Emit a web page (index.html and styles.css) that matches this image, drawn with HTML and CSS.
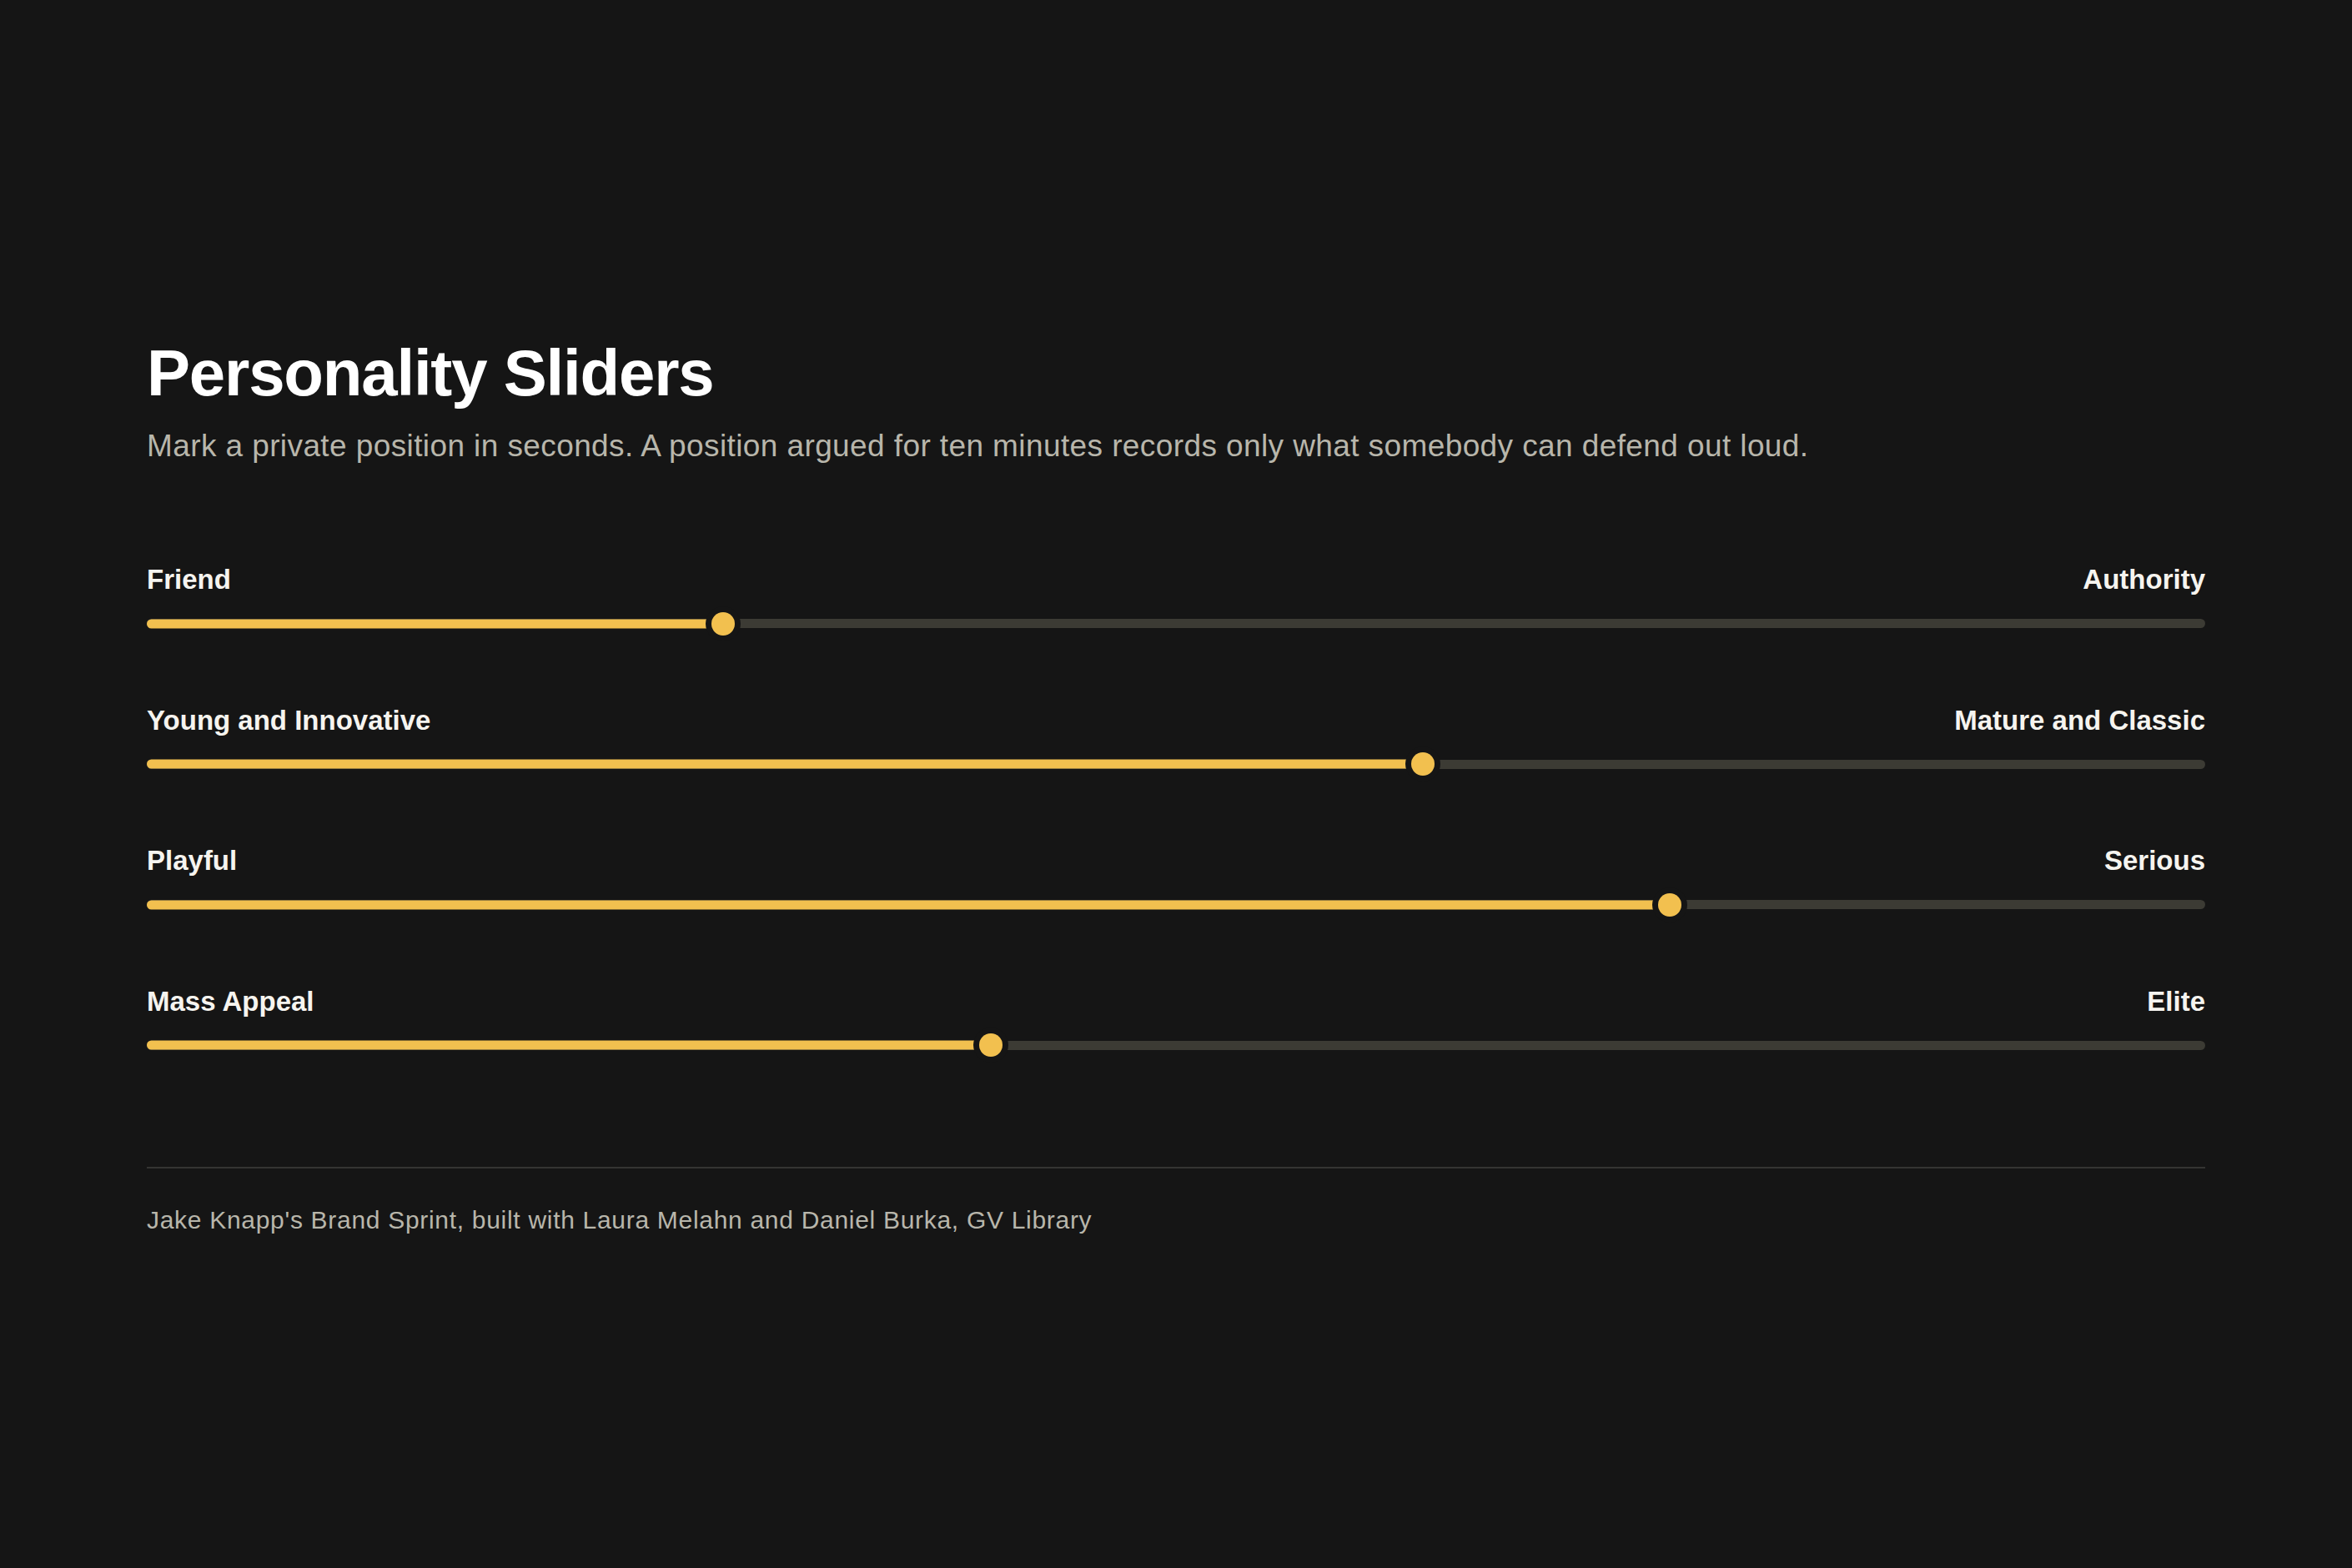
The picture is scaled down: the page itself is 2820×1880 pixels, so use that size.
FILE: index.html
```html
<!DOCTYPE html>
<html lang="en">

<head>
  <meta charset="UTF-8">
  <meta name="viewport" content="width=device-width, initial-scale=1.0">
  <title>Personality Sliders</title>

  <link rel="stylesheet" href="styles.css">
</head>

<body>
  <main class="page">
    <!-- heading -->
    <header class="intro">
      <h1 class="title">Personality Sliders</h1>
      <p class="lede">Mark a private position in seconds. A position argued for ten minutes records only what somebody can defend out loud.</p>
    </header>

    <!-- sliders -->
    <section class="sliders">
      <div class="slider">
        <div class="slider_labels">
          <span>Friend</span>
          <span>Authority</span>
        </div>
        <div class="slider_track">
          <div class="track_bar"></div>
          <div class="track_fill" style="width: 28%"></div>
          <div class="thumb" style="left: 28%"></div>
        </div>
      </div>

      <div class="slider">
        <div class="slider_labels">
          <span>Young and Innovative</span>
          <span>Mature and Classic</span>
        </div>
        <div class="slider_track">
          <div class="track_bar"></div>
          <div class="track_fill" style="width: 62%"></div>
          <div class="thumb" style="left: 62%"></div>
        </div>
      </div>

      <div class="slider">
        <div class="slider_labels">
          <span>Playful</span>
          <span>Serious</span>
        </div>
        <div class="slider_track">
          <div class="track_bar"></div>
          <div class="track_fill" style="width: 74%"></div>
          <div class="thumb" style="left: 74%"></div>
        </div>
      </div>

      <div class="slider">
        <div class="slider_labels">
          <span>Mass Appeal</span>
          <span>Elite</span>
        </div>
        <div class="slider_track">
          <div class="track_bar"></div>
          <div class="track_fill" style="width: 41%"></div>
          <div class="thumb" style="left: 41%"></div>
        </div>
      </div>
    </section>

    <!-- credit -->
    <footer class="credit">
      <p>Jake Knapp's Brand Sprint, built with Laura Melahn and Daniel Burka, GV Library</p>
    </footer>
  </main>
</body>

</html>
```

FILE: styles.css
```css
* {
  margin: 0;
  padding: 0;
  box-sizing: border-box;
}

body {
  background: #151515;
  color: #f4f2ec;
  font-family: "Liberation Sans", Arial, Helvetica, sans-serif;
}

.page {
  display: flex;
  flex-direction: column;
  justify-content: center;
  min-height: 100vh;
  padding: 5px 176px 0;
}

/* heading */
.title {
  font-size: 78px;
  line-height: 1.2;
  font-weight: 700;
  letter-spacing: -1.2px;
  color: #ffffff;
}

.lede {
  margin-top: 15px;
  font-size: 37px;
  line-height: 1.4;
  letter-spacing: 0.4px;
  color: #b8b6ab;
}

/* sliders */
.sliders {
  display: flex;
  flex-direction: column;
  gap: 75px;
  margin-top: 114px;
}

.slider {
  display: flex;
  flex-direction: column;
  gap: 12px;
}

.slider_labels {
  display: flex;
  justify-content: space-between;
  font-size: 33px;
  line-height: 1.2;
  font-weight: 700;
  color: #f6f4ef;
}

.slider_track {
  position: relative;
  display: flex;
  align-items: center;
  height: 42px;
}

.track_bar {
  width: 100%;
  height: 11px;
  border-radius: 6px;
  background: #3c3b34;
}

.track_fill {
  position: absolute;
  left: 0;
  top: 50%;
  height: 11px;
  border-radius: 6px;
  background: #f2c04f;
  transform: translateY(-50%);
}

.thumb {
  position: absolute;
  top: 50%;
  width: 28px;
  height: 28px;
  border-radius: 50%;
  background: #f2c04f;
  box-shadow: 0 0 0 7px #151515;
  transform: translate(-50%, -50%);
}

/* credit */
.credit {
  margin-top: 125px;
  padding-top: 41px;
  border-top: 2px solid #343432;
  font-size: 30px;
  line-height: 1.4;
  letter-spacing: 0.7px;
  color: #b8b6ab;
}
```
